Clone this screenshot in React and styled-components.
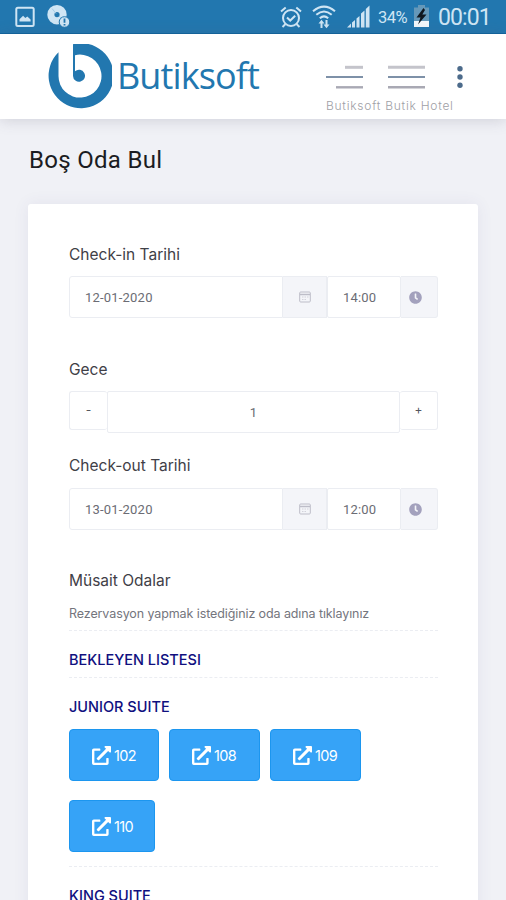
import React, { useState } from 'react'
import styled, { createGlobalStyle } from 'styled-components'
import { FaClock, FaExternalLinkAlt } from 'react-icons/fa'

const GlobalStyle = createGlobalStyle`
    * { box-sizing: border-box; }
    body {
        margin: 0;
        background: #f0f1f6;
        font-family: Inter, "Open Sans", sans-serif;
        color: #3f4047;
    }
    button, input { font: inherit; color: inherit; }
    svg { display: block; flex: none; }
`

const Page = styled.div`
    display: flex;
    flex-direction: column;
    height: 900px;
    overflow: hidden;
`

const StatusBar = styled.div`
    display: flex;
    flex: none;
    align-items: center;
    justify-content: space-between;
    height: 34px;
    padding: 0 14px 0 15px;
    background: #2277af;
    border-bottom: 1px solid #0f649e;
    color: #cfe5f4;
    font-family: Roboto, sans-serif;
`

const StatusGroup = styled.div`
    display: flex;
    align-items: center;
    height: 100%;
`

const Percent = styled.span`
    width: 32px;
    margin: 2px 4px 0 8px;
    font-size: 16.5px;
    letter-spacing: -0.5px;
    white-space: nowrap;
`

const Time = styled.span`
    width: 54px;
    margin: 1px 0 0 9px;
    font-size: 23px;
    letter-spacing: -0.9px;
    white-space: nowrap;
`

const Header = styled.header`
    display: flex;
    flex: none;
    justify-content: space-between;
    height: 85px;
    padding: 0 43px 0 46px;
    background: #fff;
    box-shadow: 0 1px 14px rgba(82, 82, 105, 0.22);
    z-index: 1;
`

const Brand = styled.div`
    display: flex;
    align-items: flex-start;
    gap: 5px;
    padding-top: 10px;
    color: #2277af;
`

const BrandName = styled.span`
    padding-top: 10px;
    font: 36px/44px "Open Sans", sans-serif;
    letter-spacing: -0.9px;
    white-space: nowrap;
`

const HeaderMenu = styled.div`
    display: flex;
    flex-direction: column;
    width: 137px;
    padding-top: 31px;
`

const MenuIcons = styled.div`
    display: flex;
    align-items: center;
`

const HotelName = styled.span`
    margin-top: 9px;
    font-size: 12px;
    line-height: 16px;
    font-weight: 300;
    letter-spacing: 0.75px;
    color: #a0a0a6;
    white-space: nowrap;
`

const Title = styled.h1`
    margin: 0;
    padding: 26px 29px 28px;
    font: 500 24px/31px Roboto, sans-serif;
    font-weight: 400;
    letter-spacing: 0.3px;
    color: #1b1c22;
`

const Card = styled.main`
    flex: 1 0 auto;
    width: 450px;
    margin: 0 28px;
    padding: 41px 40px 0 41px;
    background: #fff;
    border-radius: 3px;
    box-shadow: 0 0 16px rgba(82, 63, 125, 0.08);
`

const Field = styled.div`
    margin-bottom: ${p => p.$gap}px;
`

const Label = styled.label`
    display: block;
    margin-bottom: ${p => p.$space || 11}px;
    font-size: 15.5px;
    line-height: 20px;
    letter-spacing: ${p => p.$tracking || 0}px;
`

const Group = styled.div`
    display: flex;
    align-items: flex-start;
`

const Input = styled.input`
    width: ${p => p.$width}px;
    height: 42px;
    padding: 0 15px;
    border: 1px solid #ebedf2;
    border-radius: ${p => p.$first ? '3px 0 0 3px' : '2px'};
    background: #fff;
    outline: none;
    font: 13px Roboto, sans-serif;
    letter-spacing: 0.2px;
    color: #6b6c74;
    text-align: ${p => p.$center ? 'center' : 'left'};
`

const Addon = styled.span`
    display: flex;
    align-items: center;
    justify-content: ${p => p.$last ? 'flex-start' : 'center'};
    width: ${p => p.$width}px;
    height: 42px;
    padding-left: ${p => p.$last ? 8 : 0}px;
    border: 1px solid #ebedf2;
    border-left: 0;
    border-radius: ${p => p.$last ? '0 3px 3px 0' : 0};
    background: #f4f5f9;
    color: #a3a1bd;
`

const Step = styled.button`
    width: ${p => p.$width}px;
    height: 39px;
    padding: 0 0 3px;
    border: 1px solid #ebedf2;
    border-${p => p.$side}-width: 0;
    border-radius: 3px;
    background: #fff;
    font-size: 12px;
    color: #55565e;
`

const Hint = styled.p`
    margin: 14px 0 0;
    padding-bottom: 7px;
    border-bottom: 1px dashed #ebedf2;
    font-size: 12.5px;
    line-height: 18px;
    color: #74757d;
    white-space: nowrap;
    letter-spacing: -0.1px;
`

const RoomType = styled.section`
    padding: 19px 0 ${p => p.$bottom}px;
    border-bottom: 1px dashed #ebedf2;
`

const RoomTitle = styled.h2`
    margin: 0;
    font-size: 14.5px;
    font-weight: 500;
    line-height: 20px;
    letter-spacing: ${p => p.$tracking || 0}px;
    color: #10107f;
`

const Rooms = styled.div`
    display: flex;
    flex-wrap: wrap;
    gap: 19px 10px;
    padding-top: 12px;
`

const Room = styled.button`
    display: flex;
    align-items: center;
    gap: 3px;
    width: ${p => p.$width}px;
    height: 52px;
    padding: 0 0 0 22px;
    border: 1px solid #1c96ef;
    border-radius: 4px;
    background: #36a3f7;
    color: #fff;
    font-size: 14.5px;
    letter-spacing: -0.6px;
`

const GalleryIcon = () => (
    <svg width="21" height="22" viewBox="0 0 21 22">
        <rect x="1.3" y="1.7" width="17.4" height="18.3" rx="1.5" fill="none" stroke="#cfe5f4" strokeWidth="2" />
        <path d="M4.5 15.5v-2.3l3.6-3.5 2.2 2.2 2-1.5 3.3 3v2.1z" fill="#cfe5f4" />
    </svg>
)

const DiscIcon = () => (
    <svg width="25" height="25" viewBox="0 0 25 25">
        <path fillRule="evenodd" d="M10 1a9.7 9.7 0 1 0 0 19.4A9.7 9.7 0 0 0 10 1zm0 7a2.6 2.6 0 1 1 0 5.200 2.600 2.600 0 0 1 0-5.200z" fill="#cfe5f4" />
        <path d="M5 4.500l4 5M16 16l-4-4" stroke="#a7cde6" strokeWidth="1" />
        <circle cx="17.500" cy="18" r="5.300" fill="#cfe5f4" stroke="#2277af" strokeWidth="1" />
        <path d="M17.500 14.500v4.200M17.500 20v1.500" stroke="#2277af" strokeWidth="1.800" />
    </svg>
)

const AlarmIcon = () => (
    <svg width="22" height="24" viewBox="0 0 22 24" fill="none" stroke="#cfe5f4" strokeWidth="2">
        <circle cx="11" cy="13" r="8" />
        <path d="M1 6.500l4.700-4M16.300 2.500l4.700 4M5.500 19l-3 3M16.500 19l3 3M7 12.500l3.200 3 5-4.800" />
    </svg>
)

const WifiIcon = () => (
    <svg width="24" height="25" viewBox="0 0 24 25" fill="none" stroke="#cfe5f4" strokeWidth="2">
        <path d="M1 7.200Q12-2 23 7.200M4.300 10.700Q12 4.200 19.700 10.700M7.800 14.200Q12 10.500 16.200 14.200" />
        <path d="M9.500 24v-6M14.500 16v6" />
        <path d="M6.500 19.500l3-3.800 3 3.800zM11.500 20.500l3 3.800 3-3.800z" fill="#cfe5f4" stroke="none" />
    </svg>
)

const SignalIcon = () => (
    <svg width="23" height="23" viewBox="0 0 23 23" fill="#cfe5f4">
        <path d="M0 22.500l4-4v4zM5 17.500l3-2.500v7.500H5zM9.500 13.500l3-2.500v11.500h-3zM14 8.500l3.500-3v17H14zM18.800 4l3.700-3.500v22h-3.700z" />
    </svg>
)

const BatteryIcon = () => (
    <svg width="15" height="23" viewBox="0 0 15 23">
        <path d="M4 0h7v2.500h4V22H0V2.500h4z" fill="#6598b9" />
        <path d="M0 16h15v6H0z" fill="#f2f7fb" />
        <path d="M9.500 3L2.500 12.500h4L4 19.500l8.500-10H8.300L11 5z" fill="#101820" />
    </svg>
)

const Logo = () => (
    <svg width="66" height="66" viewBox="0 0 66 66">
        <path
            d="M27 0.200A32.500 32.500 0 1 1 12.500 8.300V32A21.500 21.500 0 1 0 29 11.200V27.300A6 6 0 1 1 27 32z"
            fill="#2277af"
        />
    </svg>
)

const AlignIcon = () => (
    <svg width="37" height="24" viewBox="0 0 37 24">
        <path d="M19 2.300h18" stroke="#c4c4cb" strokeWidth="3" />
        <path d="M0 12h37" stroke="#7e91a8" strokeWidth="2" />
        <path d="M10 22.300h27" stroke="#a9a9b4" strokeWidth="2.400" />
    </svg>
)

const BarsIcon = () => (
    <svg width="37" height="24" viewBox="0 0 37 24">
        <path d="M0 2.300h37" stroke="#c4c4cb" strokeWidth="3" />
        <path d="M0 12h37" stroke="#7e91a8" strokeWidth="2" />
        <path d="M0 22.300h37" stroke="#a9a9b4" strokeWidth="2.400" />
    </svg>
)

const DotsIcon = () => (
    <svg width="6" height="24" viewBox="0 0 6 24" fill="#4c6b8b">
        <circle cx="3" cy="3.700" r="2.700" />
        <circle cx="3" cy="12" r="2.700" />
        <circle cx="3" cy="20.300" r="2.700" />
    </svg>
)

const CalendarIcon = () => (
    <svg width="12" height="12" viewBox="0 0 12 12" fill="none" stroke="#bdbdc8">
        <rect x="0.700" y="1" width="10.600" height="10" rx="1" />
        <path d="M1 3.500h10" strokeWidth="1.500" />
        <path d="M3 6h1.500M5.500 6H7M8 6h1.500M3 8.500h1.500M5.500 8.500H7" stroke="#d2d2da" />
    </svg>
)

const MenuGap = styled.i`
    width: ${p => p.$size}px;
`

const DateRow = ({ date, time }) => (
    <Group>
        <Input $width={214} $first defaultValue={date} />
        <Addon $width={44}><CalendarIcon /></Addon>
        <Input $width={74} defaultValue={time} />
        <Addon $width={37} $last><FaClock size={13} /></Addon>
    </Group>
)

const suiteRooms = [
    { no: '102', width: 90 },
    { no: '108', width: 91 },
    { no: '109', width: 91 },
    { no: '110', width: 86 },
]

export default function App() {
    const [nights, setNights] = useState(1)

    return (
        <>
            <GlobalStyle />
            <Page>
                <StatusBar>
                    <StatusGroup>
                        <GalleryIcon />
                        <MenuGap $size={11} />
                        <DiscIcon />
                    </StatusGroup>
                    <StatusGroup>
                        <AlarmIcon />
                        <MenuGap $size={10} />
                        <WifiIcon />
                        <MenuGap $size={11} />
                        <SignalIcon />
                        <Percent>34%</Percent>
                        <BatteryIcon />
                        <Time>00:01</Time>
                    </StatusGroup>
                </StatusBar>
                <Header>
                    <Brand>
                        <Logo />
                        <BrandName>Butiksoft</BrandName>
                    </Brand>
                    <HeaderMenu>
                        <MenuIcons>
                            <AlignIcon />
                            <MenuGap $size={25} />
                            <BarsIcon />
                            <MenuGap $size={32} />
                            <DotsIcon />
                        </MenuIcons>
                        <HotelName>Butiksoft Butik Hotel</HotelName>
                    </HeaderMenu>
                </Header>
                <Title>Boş Oda Bul</Title>
                <Card>
                    <Field $gap={42}>
                        <Label>Check-in Tarihi</Label>
                        <DateRow date="12-01-2020" time="14:00" />
                    </Field>
                    <Field $gap={23}>
                        <Label>Gece</Label>
                        <Group>
                            <Step $width={38} $side="right" onClick={() => setNights(Math.max(1, nights - 1))}>-</Step>
                            <Input $width={293} $center value={nights} readOnly />
                            <Step $width={38} $side="left" onClick={() => setNights(nights + 1)}>+</Step>
                        </Group>
                    </Field>
                    <Field $gap={41}>
                        <Label $space={12}>Check-out Tarihi</Label>
                        <DateRow date="13-01-2020" time="12:00" />
                    </Field>
                    <Label $space={0}>Müsait Odalar</Label>
                    <Hint>Rezervasyon yapmak istediğiniz oda adına tıklayınız</Hint>
                    <RoomType $bottom={7}>
                        <RoomTitle>BEKLEYEN LISTESI</RoomTitle>
                    </RoomType>
                    <RoomType $bottom={14}>
                        <RoomTitle>JUNIOR SUITE</RoomTitle>
                        <Rooms>
                            {suiteRooms.map(room => (
                                <Room key={room.no} $width={room.width}>
                                    <FaExternalLinkAlt size={19} />
                                    {room.no}
                                </Room>
                            ))}
                        </Rooms>
                    </RoomType>
                    <RoomType $bottom={14}>
                        <RoomTitle>KING SUITE</RoomTitle>
                    </RoomType>
                </Card>
            </Page>
        </>
    )
}
